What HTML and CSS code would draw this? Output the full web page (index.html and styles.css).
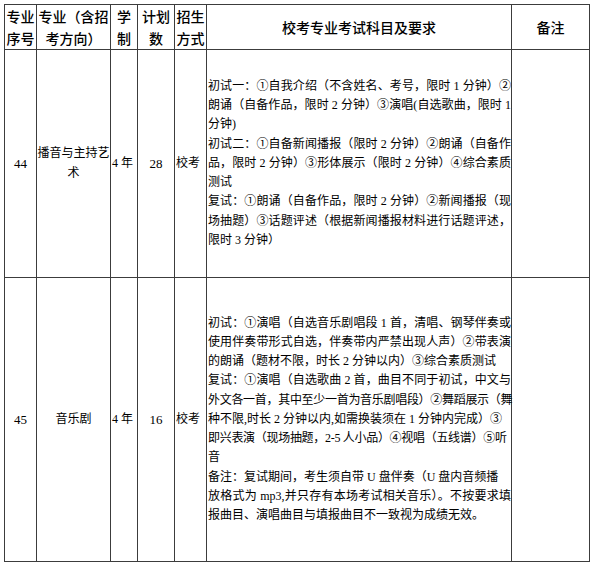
FILE: index.html
```html
<!DOCTYPE html>
<html lang="zh">
<head>
<meta charset="utf-8">
<link rel="stylesheet" href="styles.css">
</head>
<body>
<table class="plan">
  <colgroup>
    <col class="c-no">
    <col class="c-major">
    <col class="c-years">
    <col class="c-count">
    <col class="c-mode">
    <col class="c-req">
    <col class="c-note">
  </colgroup>
  <thead>
    <tr class="head">
      <th>专业序号</th>
      <th>专业（含招考方向）</th>
      <th>学制</th>
      <th>计划数</th>
      <th>招生方式</th>
      <th>校考专业考试科目及要求</th>
      <th>备注</th>
    </tr>
  </thead>
  <tbody>
    <tr class="row-a">
      <td class="num">44</td>
      <td>播音与主持艺术</td>
      <td class="yr">4 年</td>
      <td class="num">28</td>
      <td class="yr">校考</td>
      <td class="req">
        <p>初试一：①自我介绍（不含姓名、考号，限时 1 分钟）②朗诵（自备作品，限时 2 分钟）③演唱(自选歌曲，限时 1 分钟)</p>
        <p>初试二：①自备新闻播报（限时 2 分钟）②朗诵（自备作品，限时 2 分钟）③形体展示（限时 2 分钟）④综合素质测试</p>
        <p>复试：①朗诵（自备作品，限时 2 分钟）②新闻播报（现场抽题）③话题评述（根据新闻播报材料进行话题评述，限时 3 分钟）</p>
      </td>
      <td></td>
    </tr>
    <tr class="row-b">
      <td class="num">45</td>
      <td>音乐剧</td>
      <td class="yr">4 年</td>
      <td class="num">16</td>
      <td class="yr">校考</td>
      <td class="req">
        <p>初试：①演唱（自选音乐剧唱段 1 首，清唱、钢琴伴奏或使用伴奏带形式自选，伴奏带内严禁出现人声）②带表演的朗诵（题材不限，时长 2 分钟以内）③综合素质测试</p>
        <p>复试：①演唱（自选歌曲 2 首，曲目不同于初试，中文与<span class="fit">外文各一首，其中至少一首为音乐剧唱段）②舞蹈展示（舞</span><br>种不限,时长 2 分钟以内,如需换装须在 1 分钟内完成）③<br><span class="fit">即兴表演（现场抽题，2-5 人小品）④视唱（五线谱）⑤听</span><br>音</p>
        <p>备注：复试期间，考生须自带 U 盘伴奏（U 盘内音频播<br>放格式为 mp3,并只存有本场考试相关音乐）。不按要求填报曲目、演唱曲目与填报曲目不一致视为成绩无效。</p>
      </td>
      <td></td>
    </tr>
  </tbody>
</table>
</body>
</html>
```

FILE: styles.css
```css
html, body {
  margin: 0;
  padding: 0;
  background: #ffffff;
}

body {
  padding: 4px 0 0 4px;
}

.plan {
  border-collapse: collapse;
  table-layout: fixed;
  width: 585px;
  color: #000;
}

.c-no { width: 32px; }
.c-major { width: 74px; }
.c-years { width: 27px; }
.c-count { width: 37px; }
.c-mode { width: 32px; }
.c-req { width: 305px; }
.c-note { width: 78px; }

.plan th,
.plan td {
  border: 1px solid #3c3c3c;
  padding: 0;
  vertical-align: middle;
  text-align: center;
}

.head {
  height: 44px;
}

.head th {
  font-family: "Noto Sans CJK SC", sans-serif;
  font-weight: 500;
  font-size: 14px;
  line-height: 22px;
}

.plan td {
  font-family: "Liberation Serif", "Noto Sans CJK SC", serif;
  font-size: 12px;
  line-height: 19.2px;
}

.row-a { height: 228px; }
.row-b { height: 284px; }

.plan td.num {
  font-size: 13px;
}

.plan td.yr {
  text-align: left;
  padding-left: 1px;
}

.plan td.req {
  text-align: justify;
  padding: 0 0 0 1px;
}

.req p {
  margin: 0;
}

.fit {
  white-space: nowrap;
  letter-spacing: -0.3px;
}
```
